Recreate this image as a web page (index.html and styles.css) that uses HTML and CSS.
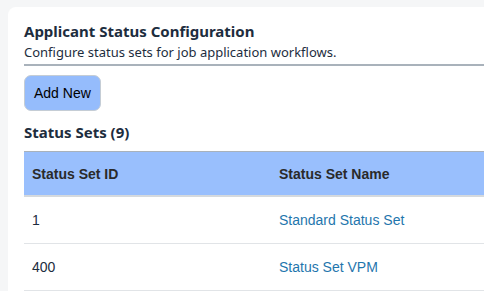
FILE: index.html
```html
<!DOCTYPE html>
<html lang="en">
<head>
    <meta charset="UTF-8">
    <title>Applicant Status Configuration</title>
    <link rel="stylesheet" href="styles.css">
</head>
<body>
    <div class="page">
        <div class="card">
            <div class="header">
                <h1 class="title">Applicant Status Configuration</h1>
                <p class="subtitle">Configure status sets for job application workflows.</p>
            </div>
            <button class="btn" type="button">Add New</button>
            <h2 class="section-title">Status Sets (9)</h2>
            <table class="sets">
                <thead>
                    <tr>
                        <th class="col-id">Status Set ID</th>
                        <th>Status Set Name</th>
                    </tr>
                </thead>
                <tbody>
                    <tr>
                        <td>1</td>
                        <td><a href="#">Standard Status Set</a></td>
                    </tr>
                    <tr>
                        <td>400</td>
                        <td><a href="#">Status Set VPM</a></td>
                    </tr>
                </tbody>
            </table>
        </div>
    </div>
</body>
</html>
```

FILE: styles.css
```css
body {
    margin: 0;
    padding: 0;
    background-color: #f5f6f7;
    font-family: "Liberation Sans", Arial, sans-serif;
    color: #1d2d3e;
    overflow: hidden;
}

.page {
    padding: 7px 0 0 8px;
    height: 291px;
    box-sizing: border-box;
}

.card {
    background-color: #fff;
    border-radius: 8px 0 0 0;
    padding: 13px 0 0 16px;
    height: 100%;
    box-sizing: border-box;
    overflow: hidden;
}

.header {
    border-bottom: 2px solid #a9b2bb;
    padding-bottom: 3px;
}

.title {
    font-family: "Noto Sans", sans-serif;
    font-size: 15px;
    font-weight: 700;
    margin: 0;
    line-height: 22px;
}

.subtitle {
    font-family: "Noto Sans", sans-serif;
    font-size: 13px;
    margin: 1px 0 0;
    line-height: 18px;
}

.btn {
    margin-top: 9px;
    background-color: #95bcfc;
    border: 1px solid #c5cdd5;
    border-radius: 7px;
    height: 36px;
    padding: 0 9px;
    font-family: "Liberation Sans", Arial, sans-serif;
    font-size: 14px;
    color: #000;
    cursor: pointer;
}

.section-title {
    font-family: "Noto Sans", sans-serif;
    font-size: 15px;
    font-weight: 700;
    margin: 10px 0 0;
    line-height: 22px;
}

.sets {
    margin-top: 8px;
    border-collapse: collapse;
    width: 100%;
    font-size: 14px;
}

.sets th {
    background-color: #99bffd;
    text-align: left;
    font-weight: 700;
    color: #2a2a2a;
    height: 43px;
    padding: 0 8px;
    border-top: 1px solid #a9b2bb;
    border-bottom: 2px solid #d5d9dd;
}

.sets th.col-id {
    width: 231px;
}

.sets td {
    height: 46px;
    padding: 0 8px;
    border-bottom: 1px solid #e1e4e7;
}

.sets a {
    color: #1f76ad;
    text-decoration: none;
}
```
